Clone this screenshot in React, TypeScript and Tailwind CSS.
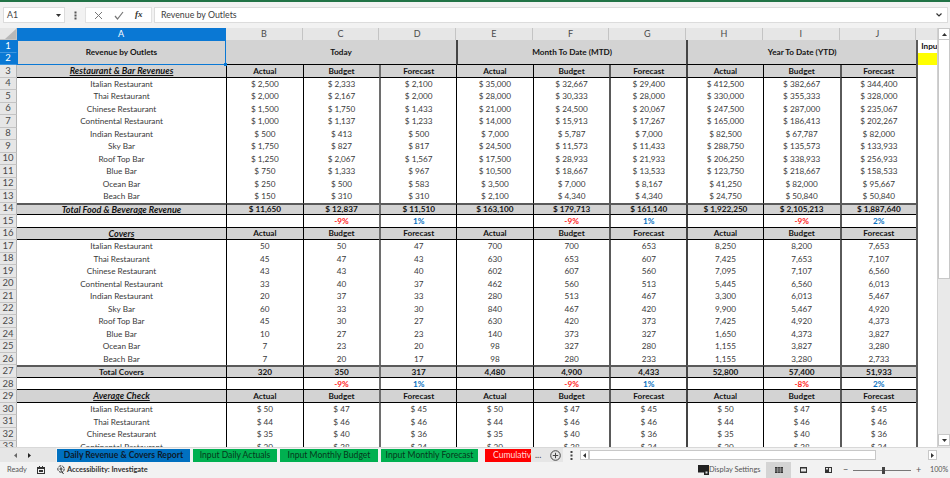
import React from "react";

type Row = { n: number; kind: "head" | "data" | "total" | "pct"; label?: string; vals: string[] };

const hdr = ["Actual", "Budget", "Forecast", "Actual", "Budget", "Forecast", "Actual", "Budget", "Forecast"];
const d = (s: string) => s.split(" ").map((v) => "$ " + v);
const p = (s: string) => s.split(" ");
const names = ["Italian Restaurant", "Thai Restaurant", "Chinese Restaurant", "Continental Restaurant", "Indian Restaurant", "Sky Bar", "Roof Top Bar", "Blue Bar", "Ocean Bar", "Beach Bar"];

const rev = [
  "2,500 2,333 2,100 35,000 32,667 29,400 412,500 382,667 344,400",
  "2,000 2,167 2,000 28,000 30,333 28,000 330,000 355,333 328,000",
  "1,500 1,750 1,433 21,000 24,500 20,067 247,500 287,000 235,067",
  "1,000 1,137 1,233 14,000 15,913 17,267 165,000 186,413 202,267",
  "500 413 500 7,000 5,787 7,000 82,500 67,787 82,000",
  "1,750 827 817 24,500 11,573 11,433 288,750 135,573 133,933",
  "1,250 2,067 1,567 17,500 28,933 21,933 206,250 338,933 256,933",
  "750 1,333 967 10,500 18,667 13,533 123,750 218,667 158,533",
  "250 500 583 3,500 7,000 8,167 41,250 82,000 95,667",
  "150 310 310 2,100 4,340 4,340 24,750 50,840 50,840",
];
const cov = [
  "50 50 47 700 700 653 8,250 8,200 7,653",
  "45 47 43 630 653 607 7,425 7,653 7,107",
  "43 43 40 602 607 560 7,095 7,107 6,560",
  "33 40 37 462 560 513 5,445 6,560 6,013",
  "20 37 33 280 513 467 3,300 6,013 5,467",
  "60 33 30 840 467 420 9,900 5,467 4,920",
  "45 30 27 630 420 373 7,425 4,920 4,373",
  "10 27 23 140 373 327 1,650 4,373 3,827",
  "7 23 20 98 327 280 1,155 3,827 3,280",
  "7 20 17 98 280 233 1,155 3,280 2,733",
];
const avg = [
  "50 47 45 50 47 45 50 47 45",
  "44 46 46 44 46 46 44 46 46",
  "35 40 36 35 40 36 35 40 36",
  "30 28 34 30 28 34 30 28 34",
];

const rows: Row[] = [
  { n: 3, kind: "head", label: "Restaurant & Bar Revenues", vals: hdr },
  ...rev.map((r, i) => ({ n: 4 + i, kind: "data" as const, label: names[i], vals: d(r) })),
  { n: 14, kind: "total", label: "Total Food & Beverage Revenue", vals: d("11,650 12,837 11,510 163,100 179,713 161,140 1,922,250 2,105,213 1,887,640") },
  { n: 15, kind: "pct", vals: ["", "-9%", "1%", "", "-9%", "1%", "", "-9%", "2%"] },
  { n: 16, kind: "head", label: "Covers", vals: hdr },
  ...cov.map((r, i) => ({ n: 17 + i, kind: "data" as const, label: names[i], vals: p(r) })),
  { n: 27, kind: "total", label: "Total Covers", vals: p("320 350 317 4,480 4,900 4,433 52,800 57,400 51,933") },
  { n: 28, kind: "pct", vals: ["", "-9%", "1%", "", "-9%", "1%", "", "-8%", "2%"] },
  { n: 29, kind: "head", label: "Average Check", vals: hdr },
  ...avg.map((r, i) => ({ n: 30 + i, kind: "data" as const, label: names[i], vals: d(r) })),
];

// left-hand rule of columns B..J
const vLine = [
  "border-l border-l-black",
  "border-l border-l-black",
  "border-l-2 border-l-[#6e6e6e]",
  "border-l border-l-black",
  "border-l border-l-black",
  "border-l-2 border-l-[#5a5a5a]",
  "border-l-2 border-l-[#444444]",
  "border-l border-l-black",
  "border-l-2 border-l-[#5a5a5a]",
];

const cellCenter = "flex items-center justify-center whitespace-nowrap overflow-hidden";

function RowHead({ n, active }: { n: number | string; active?: boolean }) {
  return (
    <div
      className={`${cellCenter} border-b border-r text-[9.5px] ${
        active ? "bg-[#0a78d4] text-white border-b-[#3f97e0] border-r-[#0a78d4]" : "bg-[#e6e6e6] text-[#4a4a4a] border-b-[#c4c4c4] border-r-[#b5b5b5]"
      }`}
    >
      {n}
    </div>
  );
}

function ColHead({ t, active }: { t: string; active?: boolean }) {
  return (
    <div
      className={`${cellCenter} border-r text-[9px] ${
        active ? "bg-[#0a78d4] text-white border-r-[#0a78d4]" : "bg-[#e6e6e6] text-[#4a4a4a] border-r-[#c4c4c4]"
      }`}
    >
      {t}
    </div>
  );
}

function SheetRow({ r }: { r: Row }) {
  const rowCls =
    r.kind === "head"
      ? "bg-[#d3d3d3] font-bold text-[#141414] border-b border-b-black"
      : r.kind === "total"
        ? "bg-[#d3d3d3] font-bold text-[#141414] border-t-2 border-t-[#5a5a5a] border-b border-b-black"
        : r.kind === "pct"
          ? "bg-white font-bold border-b border-b-black"
          : "bg-white text-[#3a3a3a]";
  const labelCls =
    r.kind === "head"
      ? "italic underline text-[9.1px]"
      : r.kind === "total" && r.n === 14
        ? "italic text-[9.1px]"
        : "text-[8.2px]";
  return (
    <>
      <RowHead n={r.n} />
      <div className={`${cellCenter} ${rowCls} ${labelCls}`}>{r.label}</div>
      {r.vals.map((v, i) => (
        <div
          key={i}
          className={`${cellCenter} text-[8.2px] ${rowCls} ${vLine[i]} ${
            r.kind === "pct" ? (v.startsWith("-") ? "text-[#ff2020]" : "text-[#0a70c0]") : ""
          }`}
        >
          {v}
        </div>
      ))}
      <div className="bg-white border-l-2 border-l-[#5a5a5a]" />
    </>
  );
}

export default function App() {
  return (
    <div
      className="w-[950px] h-[478px] overflow-hidden flex flex-col bg-[#f2f2f2]"
      style={{ fontFamily: "Lato, 'Open Sans', sans-serif" }}
    >
      <div className="h-[2px] bg-[#217346] shrink-0" />
      {/* formula bar */}
      <div className="h-[26px] shrink-0 flex items-start pt-[5px] pl-[3px] pr-[2px] text-[8.8px] text-[#444]">
        <div className="w-[62px] h-[16px] bg-white border border-[#dcdcdc] flex items-center justify-between pl-[3px] pr-[3px]">
          <span>A1</span>
          <svg width="5" height="3" viewBox="0 0 5 3"><path d="M0 0h5L2.5 3z" fill="#333" /></svg>
        </div>
        <div className="w-[20px] h-[16px] flex items-center justify-center">
          <svg width="3" height="9" viewBox="0 0 3 9" fill="#555"><rect x="0.5" y="0.5" width="2" height="2" /><rect x="0.5" y="3.5" width="2" height="2" /><rect x="0.5" y="6.5" width="2" height="2" /></svg>
        </div>
        <div className="w-[67px] h-[16px] bg-white border border-[#e2e2e2] flex items-center justify-around px-[3px]">
          <svg width="9" height="9" viewBox="0 0 9 9" stroke="#777" fill="none"><path d="M1 1l7 7M8 1L1 8" /></svg>
          <svg width="10" height="9" viewBox="0 0 10 9" stroke="#777" fill="none" strokeWidth="1.2"><path d="M1 5l2.5 3L9 1" /></svg>
          <span className="italic font-bold text-[#333] text-[9px]" style={{ fontFamily: "'Liberation Serif', serif" }}>fx</span>
        </div>
        <div className="ml-[2px] flex-1 h-[16px] bg-white border border-[#dcdcdc] flex items-center justify-between pl-[6px] pr-[5px]">
          <span className="text-[#3c3c3c]">Revenue by Outlets</span>
          <svg width="6" height="4" viewBox="0 0 6 4" fill="none" stroke="#333" strokeWidth="1.2"><path d="M0.5 0.5L3 3l2.5-2.5" /></svg>
        </div>
      </div>

      {/* sheet + vertical scrollbar */}
      <div className="h-[419px] shrink-0 flex overflow-hidden">
        <div className="w-[937px] overflow-hidden grid grid-cols-[17px_209px_repeat(9,76.7px)_20.7px] grid-rows-[12px] auto-rows-[12.52px] content-start">
          <div className="bg-[#e6e6e6] border-r border-b border-[#c4c4c4] flex items-end justify-end">
            <svg width="11" height="10" viewBox="0 0 11 10"><path d="M11 0v10H0z" fill="#b8b8b8" /></svg>
          </div>
          <ColHead t="A" active />
          {["B", "C", "D", "E", "F", "G", "H", "I", "J"].map((c) => (
            <ColHead key={c} t={c} />
          ))}
          <div className="bg-[#e6e6e6]" />

          <RowHead n={1} active />
          <div className={`${cellCenter} row-span-2 bg-[#d3d3d3] border-[1.5px] border-[#0a78d4] font-bold text-[8.2px] text-[#141414] relative overflow-visible`}>
            Revenue by Outlets
            <span className="absolute -right-[2px] -bottom-[2px] w-[3px] h-[3px] bg-[#0a78d4]" />
          </div>
          <div className={`${cellCenter} col-span-3 row-span-2 bg-[#d3d3d3] border-b border-b-black font-bold text-[8.2px] text-[#141414]`}>Today</div>
          <div className={`${cellCenter} col-span-3 row-span-2 bg-[#d3d3d3] border-b border-b-black border-l-2 border-l-[#444] font-bold text-[8.2px] text-[#141414]`}>Month To Date (MTD)</div>
          <div className={`${cellCenter} col-span-3 row-span-2 bg-[#d3d3d3] border-b border-b-black border-l-2 border-l-[#444] font-bold text-[8.2px] text-[#141414]`}>Year To Date (YTD)</div>
          <div className="bg-white border-l-2 border-l-[#5a5a5a] font-bold text-[8.2px] text-[#141414] flex items-center pl-[3px] overflow-hidden">Inpu</div>
          <RowHead n={2} active />
          <div className="bg-[#ffff00] border-l-2 border-l-[#5a5a5a]" />

          {rows.map((r) => (
            <SheetRow key={r.n} r={r} />
          ))}
        </div>

        {/* vertical scrollbar */}
        <div className="w-[13px] bg-[#e9e9e9] flex flex-col border-l border-[#d0d0d0]">
          <div className="h-[12px] flex items-center justify-center bg-white border border-[#c8c8c8]">
            <svg width="5" height="3" viewBox="0 0 5 3"><path d="M2.5 0L5 3H0z" fill="#333" /></svg>
          </div>
          <div className="h-[239px] bg-white border border-[#c8c8c8] border-t-0" />
          <div className="flex-1" />
          <div className="h-[12px] mb-[1px] flex items-center justify-center bg-white border border-[#c8c8c8]">
            <svg width="5" height="3" viewBox="0 0 5 3"><path d="M0 0h5L2.5 3z" fill="#333" /></svg>
          </div>
        </div>
      </div>

      {/* tab bar */}
      <div className="h-[15px] shrink-0 flex items-center border-t border-[#d8d8d8] bg-[#f2f2f2]">
        <div className="w-[56px] h-full bg-[#e6e6e6] flex items-center pl-[14px] gap-[11px] shrink-0">
          <svg width="3" height="5" viewBox="0 0 3 5"><path d="M3 0v5L0 2.5z" fill="#666" /></svg>
          <svg width="3" height="5" viewBox="0 0 3 5"><path d="M0 0v5l3-2.5z" fill="#222" /></svg>
        </div>
        <div className="h-[13px] w-[133px] ml-[1px] shrink-0 bg-[#0070c0] font-bold text-[8.6px] text-[#0d1a2a] flex items-center justify-center whitespace-nowrap overflow-hidden">
          Daily Revenue &amp; Covers Report
        </div>
        <div className={`${cellCenter} h-[13px] w-[84px] ml-[3px] shrink-0 text-[8.6px] bg-[#00b050] text-[#06381c]`}>Input Daily Actuals</div>
        <div className={`${cellCenter} h-[13px] w-[98px] ml-[3px] shrink-0 text-[8.6px] bg-[#00b050] text-[#06381c]`}>Input Monthly Budget</div>
        <div className={`${cellCenter} h-[13px] w-[97px] ml-[3px] shrink-0 text-[8.6px] bg-[#00b050] text-[#06381c]`}>Input Monthly Forecast</div>
        <div className="h-[13px] w-[46px] ml-[7px] shrink-0 pl-[8px] bg-[#ff0000] text-[8.6px] text-[#ffd8d8] flex items-center whitespace-nowrap overflow-hidden">
          Cumulative
        </div>
        <div className="w-[32px] h-full shrink-0 bg-[#e6e6e6] flex items-center pl-[4px] gap-[9px] text-[9px] text-[#444]">
          <span>...</span>
          <svg className="shrink-0" width="11" height="11" viewBox="0 0 11 11" fill="none" stroke="#444"><circle cx="5.5" cy="5.5" r="4.8" /><path d="M5.5 2.8v5.4M2.8 5.5h5.4" /></svg>
        </div>
        <svg className="ml-[7px] shrink-0" width="3" height="9" viewBox="0 0 3 9" fill="#444"><rect x="0.5" y="0" width="2" height="2" /><rect x="0.5" y="3.5" width="2" height="2" /><rect x="0.5" y="7" width="2" height="2" /></svg>
        <div className="ml-[7px] w-[9px] h-[10px] bg-white border border-[#c8c8c8] flex items-center justify-center shrink-0">
          <svg width="3" height="5" viewBox="0 0 3 5"><path d="M3 0v5L0 2.5z" fill="#333" /></svg>
        </div>
        <div className="w-[287px] h-[10px] bg-white border border-[#c8c8c8] shrink-0" />
        <div className="flex-1" />
        <div className="w-[9px] h-[10px] mr-[13px] bg-white border border-[#c8c8c8] flex items-center justify-center shrink-0">
          <svg width="3" height="5" viewBox="0 0 3 5"><path d="M0 0v5l3-2.5z" fill="#333" /></svg>
        </div>
      </div>

      {/* status bar */}
      <div className="flex-1 flex items-center pl-[7px] text-[7.4px] text-[#555]">
        <span className="w-[18px]">Ready</span>
        <svg className="ml-[12px]" width="8" height="8" viewBox="0 0 8 8" fill="#333"><path d="M0 1h8v7H0zM1 3v4h6V3z" /><rect x="2" y="0" width="1" height="2" /><rect x="5" y="0" width="1" height="2" /><rect x="2" y="4" width="4" height="2" /></svg>
        <svg className="ml-[12px]" width="10" height="10" viewBox="0 0 10 10" fill="none" stroke="#333"><circle cx="4" cy="4" r="3.2" strokeDasharray="3 1" /><path d="M4 2.2v3l2.5 3.8M2.5 4h3" /></svg>
        <span className="font-bold text-[#333]">Accessibility: Investigate</span>
        <div className="flex-1" />
        <svg width="11" height="10" viewBox="0 0 11 10"><rect x="0" y="0" width="11" height="7.5" fill="#222" /><rect x="6" y="5" width="5" height="5" fill="#222" /><rect x="7.5" y="6.5" width="2" height="2" fill="#ddd" /></svg>
        <span className="w-[57px] whitespace-nowrap">Display Settings</span>
        <div className="w-[25px] h-[16px] bg-[#d4d4d4] flex items-center justify-center">
          <svg width="8" height="6" viewBox="0 0 8 6"><path d="M0 0h8v6H0z" fill="#333" /><path d="M0 2h8M0 4h8M2.7 0v6M5.3 0v6" stroke="#d4d4d4" strokeWidth="0.5" /></svg>
        </div>
        <div className="w-[25px] h-[16px] flex items-center justify-center">
          <svg width="7" height="6" viewBox="0 0 7 6"><path d="M0 0h7v6H0z" fill="#333" /><path d="M1 1.5h5v3H1z" fill="#e8e8e8" /></svg>
        </div>
        <div className="w-[25px] h-[16px] flex items-center justify-center">
          <svg width="7" height="6" viewBox="0 0 7 6"><path d="M0 0h7v6H0z" fill="#333" /><path d="M1 1h2v1.5H1zM4 1h2v4H4z" fill="#e8e8e8" /></svg>
        </div>
        <span className="ml-[2px] w-[5px] text-[#555] text-[9px]">−</span>
        <div className="ml-[5px] w-[58px] h-[7px] flex items-center">
          <div className="w-[29px] h-px bg-[#777]" />
          <div className="w-[3px] h-[7px] bg-[#444]" />
          <div className="flex-1 h-px bg-[#777]" />
        </div>
        <span className="ml-[5px] w-[6px] text-[#555] text-[9px]">+</span>
        <span className="ml-[8px] w-[20px] whitespace-nowrap text-[7.2px]">100%</span>
      </div>
    </div>
  );
}
